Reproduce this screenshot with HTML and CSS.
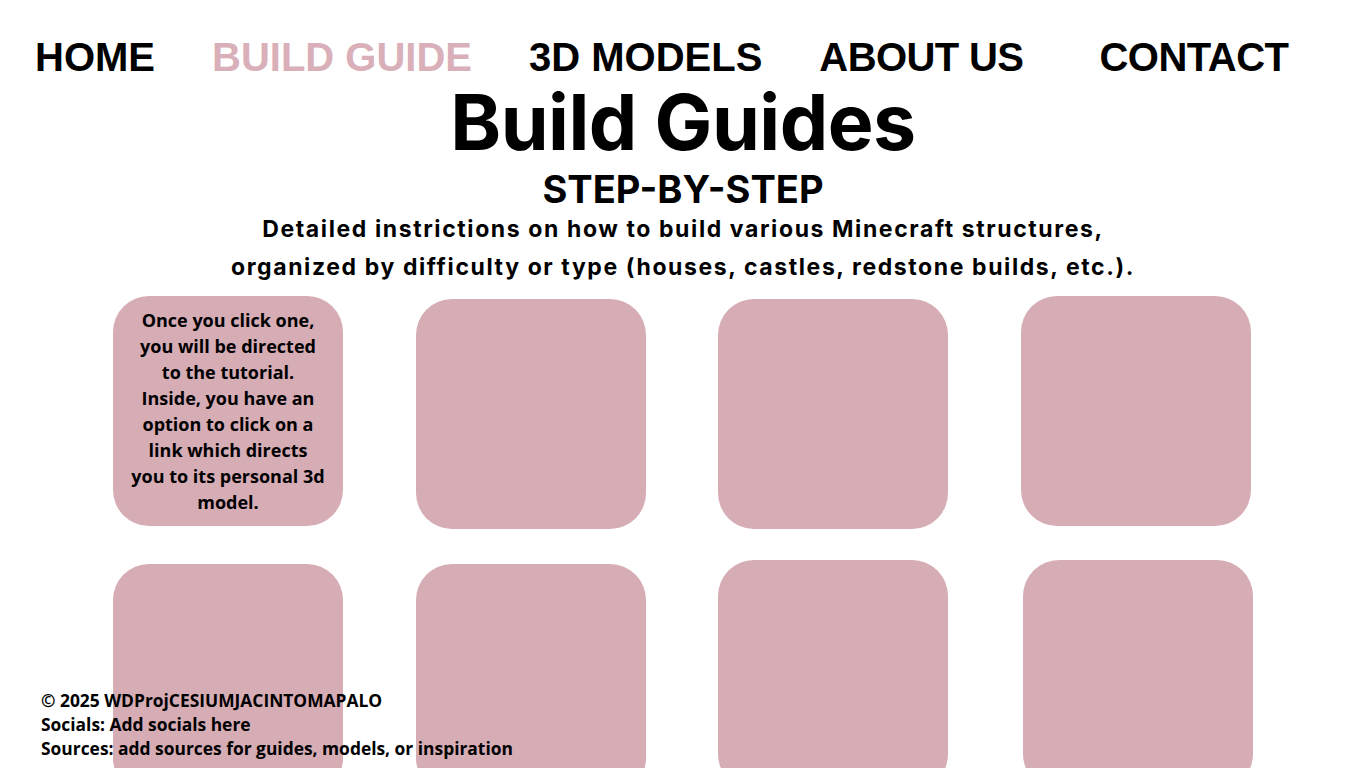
FILE: index.html
```html
<!DOCTYPE html>
<html lang="en">
<head>
<meta charset="utf-8">
<title>Build Guides</title>
<link rel="stylesheet" href="styles.css">
</head>
<body>
<nav class="nav">
  <a class="nav-link" href="#">HOME</a>
  <a class="nav-link active" href="#">BUILD GUIDE</a>
  <a class="nav-link" href="#">3D MODELS</a>
  <a class="nav-link about" href="#">ABOUT US</a>
  <a class="nav-link contact" href="#">CONTACT</a>
</nav>
<header class="hero">
  <h1 class="title">Build Guides</h1>
  <h2 class="subtitle">STEP-BY-STEP</h2>
  <p class="desc">Detailed instrictions on how to build various Minecraft structures,<br>organized by difficulty or type (houses, castles, redstone builds, etc.).</p>
</header>
<main class="grid">
  <div class="card up">
    <p class="card-text">Once you click one,<br>you will be directed<br>to the tutorial.<br>Inside, you have an<br>option to click on a<br>link which directs<br>you to its personal 3d<br>model.</p>
  </div>
  <div class="card"></div>
  <div class="card"></div>
  <div class="card up"></div>
  <div class="card down"></div>
  <div class="card down"></div>
  <div class="card"></div>
  <div class="card shift"></div>
</main>
<footer class="footer">
  <p>© 2025 WDProjCESIUMJACINTOMAPALO</p>
  <p>Socials: Add socials here</p>
  <p>Sources: add sources for guides, models, or inspiration</p>
</footer>
</body>
</html>
```
FILE: styles.css
```css
* { box-sizing: border-box; }
html, body { margin: 0; padding: 0; background: #fff; }
body {
  width: 1366px;
  height: 768px;
  overflow: hidden;
  color: #000;
  font-family: "Inter", "Liberation Sans", sans-serif;
}
.nav {
  display: flex;
  align-items: baseline;
  gap: 57px;
  padding: 37px 0 0 35px;
  height: 84px;
}
.nav-link {
  font-family: "Liberation Sans", Arial, sans-serif;
  font-weight: 700;
  font-size: 40px;
  line-height: 1;
  color: #000;
  text-decoration: none;
}
.nav-link.active { color: #d9afb9; }
.nav-link.about { letter-spacing: -0.6px; }
.nav-link.contact { margin-left: 19px; letter-spacing: -0.5px; }
.hero { text-align: center; }
.title {
  margin: 0;
  font-size: 77px;
  font-weight: 700;
  line-height: 76px;
  letter-spacing: -0.5px;
}
.subtitle {
  margin: 8px 0 0;
  font-size: 38px;
  font-weight: 700;
  line-height: 42px;
}
.desc {
  margin: 0;
  font-size: 23px;
  font-weight: 700;
  line-height: 38px;
  letter-spacing: 1.6px;
}
.grid {
  display: grid;
  grid-template-columns: repeat(4, 230px);
  column-gap: 72.6px;
  row-gap: 31px;
  padding: 13px 0 0 113px;
}
.card {
  height: 230px;
  background: #d6acb5;
  border-radius: 36px;
  display: flex;
  align-items: center;
  justify-content: center;
  padding: 0 8px;
}
.card.up { margin-top: -3px; }
.card.down { margin-top: 4px; }
.card.shift { margin-left: 2px; margin-right: -2px; }
.card-text {
  margin: 0;
  text-align: center;
  font-family: "Open Sans", sans-serif;
  font-weight: 700;
  font-size: 18px;
  line-height: 26px;
  white-space: nowrap;
}
.footer {
  position: absolute;
  left: 41px;
  top: 688px;
  font-family: "Open Sans", sans-serif;
  font-weight: 700;
  font-size: 17.4px;
  line-height: 24px;
}
.footer p { margin: 0; }
```
